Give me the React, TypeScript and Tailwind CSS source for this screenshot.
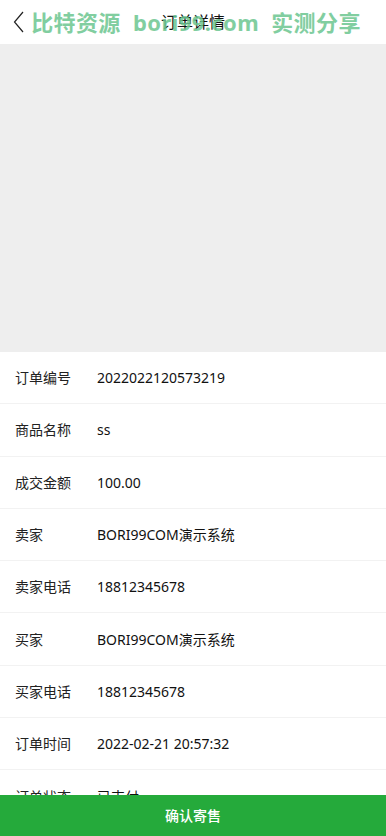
import React from "react";

const rows: [string, string][] = [
  ["订单编号", "2022022120573219"],
  ["商品名称", "ss"],
  ["成交金额", "100.00"],
  ["卖家", "BORI99COM演示系统"],
  ["卖家电话", "18812345678"],
  ["买家", "BORI99COM演示系统"],
  ["买家电话", "18812345678"],
  ["订单时间", "2022-02-21 20:57:32"],
  ["订单状态", "已支付"],
];

export default function App() {
  return (
    <div
      className="relative w-[386px] h-[836px] overflow-hidden bg-white text-[#222]"
      style={{ fontFamily: '"Noto Sans", "Noto Sans CJK SC", sans-serif' }}
    >
      {/* 헤더 */}
      <div className="relative h-[44px] flex items-center justify-center bg-white">
        <svg
          className="absolute left-[13px] top-[11px]"
          width="11"
          height="22"
          viewBox="0 0 11 22"
          fill="none"
        >
          <path d="M10 1 L1.5 11 L10 21" stroke="#222" strokeWidth="1.2" />
        </svg>
        <span className="text-[16px] text-[#111]">订单详情</span>
        {/* 워터마크 */}
        <div className="absolute inset-0 flex items-center justify-center pl-[6px] pointer-events-none">
          <span className="text-[22px] font-bold text-[#6cc690] opacity-85 tracking-[0.4px] whitespace-pre">
            比特资源  bori99.com  实测分享
          </span>
        </div>
      </div>

      {/* 상품 이미지 영역 */}
      <div className="h-[308px] bg-[#eeeeee]" />

      {/* 상세 정보 */}
      <div className="flex flex-col">
        {rows.map(([label, value]) => (
          <div
            key={label}
            className="h-[52.3px] flex items-center border-b border-[#f2f2f2] text-[14px]"
          >
            <span className="w-[97px] pl-[15px] shrink-0 text-[#222]">{label}</span>
            <span className="text-[#111]">{value}</span>
          </div>
        ))}
      </div>

      {/* 하단 버튼 */}
      <div className="absolute left-0 right-0 bottom-0 h-[41px] bg-[#25aa3b] flex items-center justify-center">
        <span className="text-white text-[14px] font-medium">确认寄售</span>
      </div>
    </div>
  );
}
